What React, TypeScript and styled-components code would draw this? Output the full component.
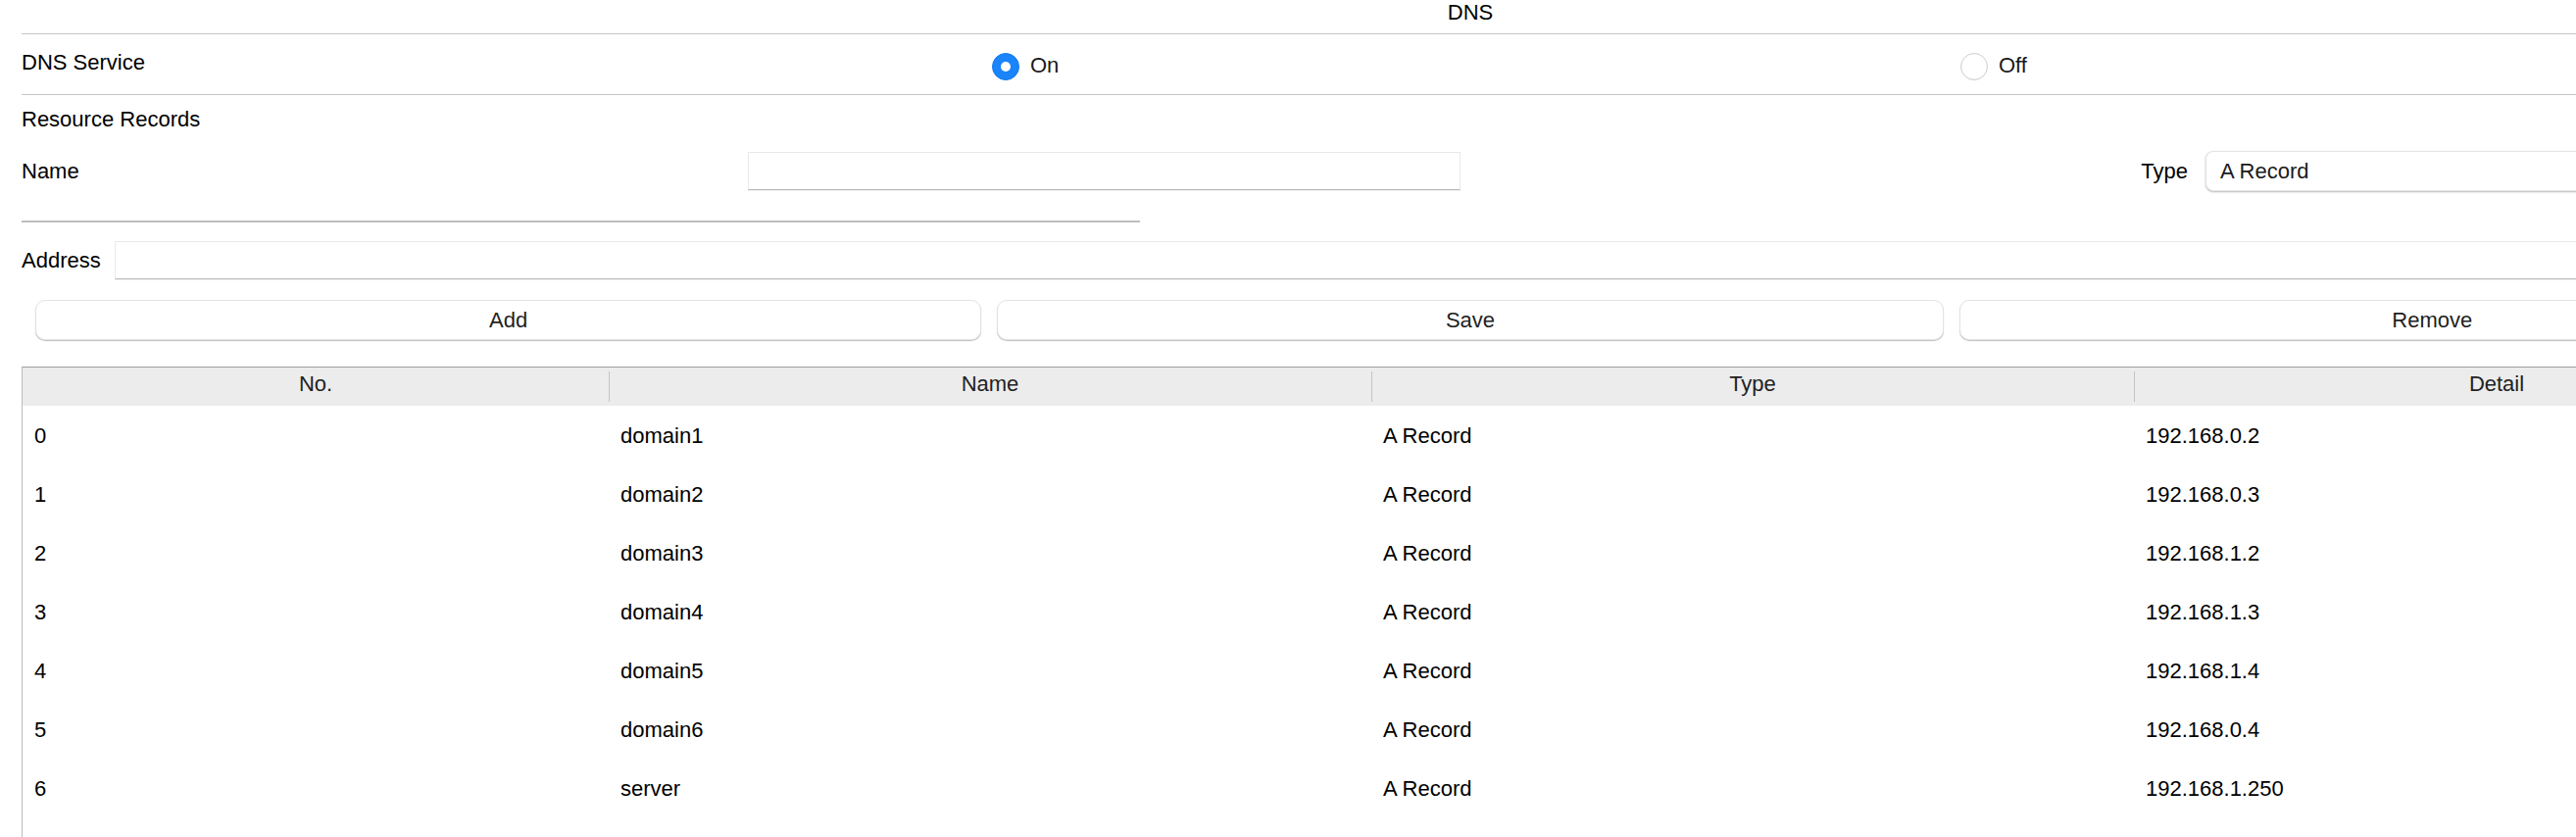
import React from 'react';
import styled, { createGlobalStyle } from 'styled-components';

const GlobalStyle = createGlobalStyle`
  html, body {
    margin: 0;
    padding: 0;
    background: #fff;
    overflow: hidden;
  }
  body {
    font-family: "Liberation Sans", Arial, Helvetica, sans-serif;
    font-size: 22px;
    color: #000;
  }
`;

type DnsRecord = {
    no: number;
    name: string;
    type: string;
    detail: string;
};

const records: DnsRecord[] = [
    {no: 0, name: 'domain1', type: 'A Record', detail: '192.168.0.2'},
    {no: 1, name: 'domain2', type: 'A Record', detail: '192.168.0.3'},
    {no: 2, name: 'domain3', type: 'A Record', detail: '192.168.1.2'},
    {no: 3, name: 'domain4', type: 'A Record', detail: '192.168.1.3'},
    {no: 4, name: 'domain5', type: 'A Record', detail: '192.168.1.4'},
    {no: 5, name: 'domain6', type: 'A Record', detail: '192.168.0.4'},
    {no: 6, name: 'server', type: 'A Record', detail: '192.168.1.250'},
];

const App = () => {
    return (
        <>
            <GlobalStyle/>
            <Page>
                <Title>DNS</Title>

                <ServiceRow>
                    <Label>DNS Service</Label>
                    <RadioOption>
                        <Radio checked/>
                        <RadioText>On</RadioText>
                    </RadioOption>
                    <RadioOption>
                        <Radio/>
                        <RadioText>Off</RadioText>
                    </RadioOption>
                </ServiceRow>

                <SectionTitle>Resource Records</SectionTitle>

                <NameRow>
                    <NameLabel>Name</NameLabel>
                    <TextField type="text" $width={727}/>
                    <TypeGroup>
                        <Label>Type</Label>
                        <SelectBox>
                            <span>A Record</span>
                            <Chevrons viewBox="0 0 12 20">
                                <path d="M2 8 L6 4 L10 8" />
                                <path d="M2 12 L6 16 L10 12" />
                            </Chevrons>
                        </SelectBox>
                    </TypeGroup>
                </NameRow>

                <Divider/>

                <AddressRow>
                    <Label>Address</Label>
                    <TextField type="text"/>
                </AddressRow>

                <ButtonBar>
                    <ActionButton>Add</ActionButton>
                    <ActionButton>Save</ActionButton>
                    <ActionButton>Remove</ActionButton>
                </ButtonBar>

                <TableFrame>
                    <RecordTable>
                        <colgroup>
                            <col style={{width: 598}}/>
                            <col style={{width: 778}}/>
                            <col style={{width: 778}}/>
                            <col style={{width: 740}}/>
                        </colgroup>
                        <thead>
                        <tr>
                            <HeadCell>No.</HeadCell>
                            <HeadCell>Name</HeadCell>
                            <HeadCell>Type</HeadCell>
                            <HeadCell>Detail</HeadCell>
                        </tr>
                        </thead>
                        <tbody>
                        {records.map(r => (
                            <tr key={r.no}>
                                <Cell>{r.no}</Cell>
                                <Cell>{r.name}</Cell>
                                <Cell>{r.type}</Cell>
                                <Cell>{r.detail}</Cell>
                            </tr>
                        ))}
                        </tbody>
                    </RecordTable>
                </TableFrame>
            </Page>
        </>
    );
};

export default App;


const Page = styled.div`
  width: 2956px;
  margin-left: 22px;
`

const Title = styled.div`
  height: 34px;
  line-height: 25px;
  text-align: center;
`

const ServiceRow = styled.div`
  display: grid;
  grid-template-columns: 990px 988px 1fr;
  align-items: flex-start;
  box-sizing: border-box;
  height: 63px;
  padding-top: 16px;
  border-top: 1px solid #c6c6c6;
  border-bottom: 1px solid #c6c6c6;
`

const Label = styled.div`
  line-height: 25px;
  white-space: nowrap;
`

const RadioOption = styled.div`
  display: flex;
  align-items: flex-start;
  gap: 11px;
`

const Radio = styled.span<{ checked?: boolean }>`
  width: 28px;
  height: 28px;
  margin-top: 3px;
  box-sizing: border-box;
  border-radius: 50%;
  display: flex;
  align-items: center;
  justify-content: center;
  background: ${p => p.checked ? '#1a84fb' : '#fff'};
  border: 1px solid ${p => p.checked ? '#1479f0' : '#cdcdcd'};
  box-shadow: ${p => p.checked ? 'none' : 'inset 0 -1px 1px rgba(0, 0, 0, 0.04)'};

  &::after {
    content: '';
    display: ${p => p.checked ? 'block' : 'none'};
    width: 10px;
    height: 10px;
    border-radius: 50%;
    background: #fff;
  }
`

const RadioText = styled.span`
  line-height: 25px;
  margin-top: 3px;
  color: #1a1a1a;
`

const SectionTitle = styled.div`
  line-height: 25px;
  padding-top: 12px;
`

const NameRow = styled.div`
  display: flex;
  align-items: center;
  margin-top: 20px;
`

const NameLabel = styled(Label)`
  width: 741px;
`

const TextField = styled.input<{ $width?: number }>`
  box-sizing: border-box;
  height: 39px;
  ${p => p.$width ? `width: ${p.$width}px;` : 'flex: 1;'}
  min-width: 0;
  margin: 0;
  padding: 0 12px;
  font: inherit;
  border: 1px solid #e9e9e9;
  border-bottom-color: #b9b9b9;
  box-shadow: 0 1px 0 rgba(0, 0, 0, 0.06);
  background: #fff;
  outline: none;
`

const TypeGroup = styled.div`
  margin-left: auto;
  display: flex;
  align-items: center;
  gap: 18px;
`

const SelectBox = styled.div`
  box-sizing: border-box;
  width: 728px;
  height: 41px;
  display: flex;
  align-items: center;
  justify-content: space-between;
  padding: 0 10px 0 14px;
  border: 1px solid #e4e4e4;
  border-radius: 8px;
  box-shadow: 0 1px 2px rgba(0, 0, 0, 0.28);
  color: #1a1a1a;
  background: #fff;
`

const Chevrons = styled.svg`
  width: 12px;
  height: 20px;
  fill: none;
  stroke: #555;
  stroke-width: 1.6;
`

const Divider = styled.div`
  width: 1141px;
  height: 2px;
  margin-top: 30px;
  background: #bdbdbd;
`

const AddressRow = styled.div`
  display: flex;
  align-items: center;
  gap: 14px;
  margin-top: 19px;
`

const ButtonBar = styled.div`
  display: grid;
  grid-template-columns: repeat(3, 1fr);
  gap: 16px;
  padding: 0 14px;
  margin-top: 21px;
`

const ActionButton = styled.button`
  height: 41px;
  margin: 0;
  font: inherit;
  color: #1f1f1f;
  background: #fff;
  border: 1px solid #e3e3e3;
  border-radius: 10px;
  box-shadow: 0 1px 1px rgba(0, 0, 0, 0.25);
  cursor: pointer;
`

const TableFrame = styled.div`
  margin-top: 27px;
  height: 520px;
  width: 2894px;
  border-top: 1px solid #9d9d9d;
  border-left: 1px solid #bdbdbd;
  overflow: hidden;
`

const RecordTable = styled.table`
  width: 100%;
  table-layout: fixed;
  border-collapse: collapse;
  border-spacing: 0;
`

const HeadCell = styled.th`
  position: relative;
  height: 39px;
  box-sizing: border-box;
  padding: 4px 0 10px;
  line-height: 25px;
  font-weight: normal;
  color: #222;
  text-align: center;
  vertical-align: top;
  background: #ececec;

  & + &::before {
    content: '';
    position: absolute;
    left: 0;
    top: 4px;
    bottom: 4px;
    width: 1px;
    background: #c4c4c4;
  }
`

const Cell = styled.td`
  height: 60px;
  padding: 0 12px;
  line-height: 25px;
  vertical-align: middle;
  white-space: nowrap;
`
